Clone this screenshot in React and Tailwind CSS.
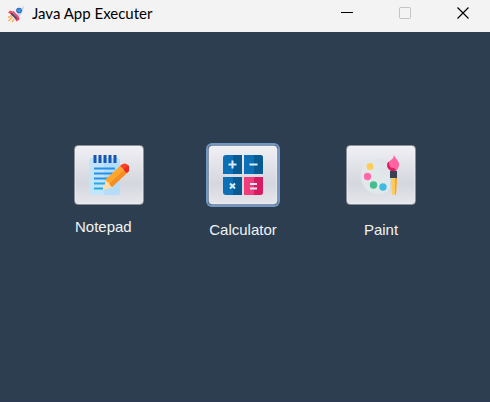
import React from 'react';

function RocketIcon() {
  return (
    <svg className="h-[18px] w-[18px] shrink-0" viewBox="0 0 18 18" aria-hidden="true">
      <path d="M1 12.500l4-2M1.500 16l4-4M5 17l2-3" stroke="#ffb45e" strokeWidth="1.600" fill="none" />
      <path d="M1 7.500l2-2 4 1.500-2 3z" fill="#f04c62" />
      <path d="M9.500 16.500l3-2-1-4-4 2z" fill="#e83d5b" />
      <path d="M5 8l3-4q4-3 9-3.500Q16.500 6 14 9.500L10 13z" fill="#eceffb" />
      <path d="M17 .5Q16.500 6 14 9.500L10 13l-2-2z" fill="#c9d0ee" />
      <path d="M3.500 9l1.500-1.500 5.500 5.500L9 14.500z" fill="#4a4672" />
      <path d="M5 7l1.500-1L12 12l-1.500 1.500z" fill="#ea4760" />
      <circle cx="12" cy="5.500" r="2.800" fill="#345b9c" />
      <circle cx="12" cy="5.500" r="1.900" fill="#2d9fe6" />
    </svg>
  );
}

function NotepadIcon() {
  return (
    <svg className="h-10 w-10" viewBox="0 0 40 40" aria-hidden="true">
      <rect x="0" y="3" width="31" height="37" rx="3" fill="#c3e5fa" />
      <path d="M15 3h13a3 3 0 0 1 3 3v31a3 3 0 0 1-3 3H15z" fill="#b5dcf8" />
      <path d="M6 0v8M11 0v8M16 0v8M21 0v8M26 0v8" stroke="#1756b0" strokeWidth="3" />
      <path d="M5 13.500h21M5 18.500h21M5 23.500h17" stroke="#2492e8" strokeWidth="2" />
      <path d="M5 28.500h13M5 33.500h9" stroke="#26a9df" strokeWidth="2" />
      <path d="M14 35l3-10 7 7z" fill="#ffdba9" />
      <path d="M16 25l15-14 7 7-15 14-3-4z" fill="#ffa62d" />
      <path d="M20 29l15-14 3 3-15 14z" fill="#f58c24" />
      <path d="M31 11l1-1q4-3 7 0t0 7l-1 1z" fill="#fb4226" />
      <path d="M34.500 14.500l5-4q2 3 0 6l-2 1.500z" fill="#e92922" />
    </svg>
  );
}

function CalculatorIcon() {
  return (
    <svg className="h-10 w-10" viewBox="0 0 40 40" aria-hidden="true">
      <path d="M3 0h16v19H0V3a3 3 0 0 1 3-3z" fill="#0b70b5" />
      <path d="M10 0h9v19h-9z" fill="#085b92" />
      <path d="M21 0h16a3 3 0 0 1 3 3v16H21z" fill="#0b70b5" />
      <path d="M31 0h6a3 3 0 0 1 3 3v16h-9z" fill="#085b92" />
      <path d="M0 22h19v18H3a3 3 0 0 1-3-3z" fill="#0b70b5" />
      <path d="M10 22h9v18h-9z" fill="#085b92" />
      <path d="M21 22h19v15a3 3 0 0 1-3 3H21z" fill="#f23d7d" />
      <path d="M31 22h9v15a3 3 0 0 1-3 3h-6z" fill="#d91c62" />
      <path d="M5.500 9.500h8M9.500 5.500v8M26.500 9.500h8M7 28.500l5 5M12 28.500l-5 5M27 29h7M27 33.500h7" stroke="#d9edf8" strokeWidth="2" />
    </svg>
  );
}

function PaintIcon() {
  return (
    <svg className="h-10 w-10" viewBox="0 0 40 40" aria-hidden="true">
      <path d="M18 3C7 4 0 11 0 21s7 18 17 18c6 0 10-2 12-6V20c-4 1-8-1-10-3s3-3 2-7c-2 0-5-3-3-7z" fill="#e1e8e9" />
      <path d="M18 3c-3 5 0 8 3 8 1 4-3 5-1 7 3 3 6 2 9 2V8q-4-4-11-5z" fill="#e1e4e9" />
      <circle cx="9" cy="11.500" r="3.500" fill="#ffcc5b" />
      <circle cx="6.500" cy="21.500" r="3.700" fill="#ff69aa" />
      <circle cx="12.500" cy="30" r="3.700" fill="#45bd91" />
      <circle cx="22" cy="32" r="3.700" fill="#3fbbe2" />
      <path d="M30 23h6l-1 16q-2 2-4 0z" fill="#ffcc57" />
      <path d="M34 23h2l-1 16-1 1z" fill="#eea43b" />
      <path d="M29 16h7v7h-7z" fill="#394354" />
      <path d="M33 0c2 5 6 6 5 11q-1 3-3 5h-5c-5-4-5-8 0-11q3-2 3-5z" fill="#ff63a3" />
      <path d="M28 7c0 4 1 6 5 6l2 2-1 1h-4q-6-4-3-9z" fill="#db1e5c" />
    </svg>
  );
}

function TitleBar() {
  return (
    <header className="flex h-8 items-start bg-[#f3f3f3] pr-1 pl-[7px] text-black">
      <div className="flex h-7 flex-1 items-center gap-[7px]">
        <RocketIcon />
        <h1 className="pb-0.5 font-['Lato','Noto_Sans',sans-serif] text-[15px] leading-5">Java App Executer</h1>
      </div>
      <div className="flex h-[26px] gap-3">
        <button type="button" aria-label="Minimize" className="flex w-[46px] items-center justify-center">
          <svg width="12" height="12" viewBox="0 0 12 12"><path d="M0 5.500h12" stroke="currentColor" /></svg>
        </button>
        <button type="button" aria-label="Maximize" disabled className="flex w-[46px] items-center justify-center text-[#c3c3c3]">
          <svg width="12" height="12" viewBox="0 0 12 12"><rect x=".5" y=".5" width="11" height="11" rx="1" fill="none" stroke="currentColor" /></svg>
        </button>
        <button type="button" aria-label="Close" className="flex w-[46px] items-center justify-center">
          <svg width="12" height="12" viewBox="0 0 12 12"><path d="M.5.5l11 11M11.500.5l-11 11" stroke="currentColor" strokeWidth="1.200" /></svg>
        </button>
      </div>
    </header>
  );
}

function Launcher({ id, label, icon, className, buttonClass, labelClass }) {
  return (
    <div className={'flex w-[70px] flex-col ' + className}>
      <button
        type="button"
        aria-labelledby={id}
        className={'flex h-[60px] w-full items-center justify-center rounded-[4px] border bg-linear-to-b from-[#f0f0f4] via-[#d5d7df] via-65% to-[#e6e7ec] inset-shadow-[0_0_2px_#ffffff] ' + buttonClass}
      >
        {icon}
      </button>
      <span id={id} className={'text-[15px] leading-5 text-[#f1f3f5] ' + labelClass}>{label}</span>
    </div>
  );
}

export default function App() {
  return (
    <div className="flex min-h-screen flex-col bg-[#2d3e50] font-['Liberation_Sans',Arial,sans-serif]">
      <TitleBar />
      <main className="flex flex-1 items-start justify-center gap-16 border-b-2 border-[#2d3b52] pt-[113px]">
        <Launcher id="notepad" label="Notepad" icon={<NotepadIcon />} className="items-start" buttonClass="border-[#8b8f98]" labelClass="mt-3 pl-px" />
        <Launcher id="calculator" label="Calculator" icon={<CalculatorIcon />} className="mr-1 items-center" buttonClass="border-[#8793a5] ring-2 ring-[#7197c4]" labelClass="mt-[15px]" />
        <Launcher id="paint" label="Paint" icon={<PaintIcon />} className="items-center" buttonClass="border-[#8b8f98]" labelClass="mt-[15px]" />
      </main>
    </div>
  );
}
